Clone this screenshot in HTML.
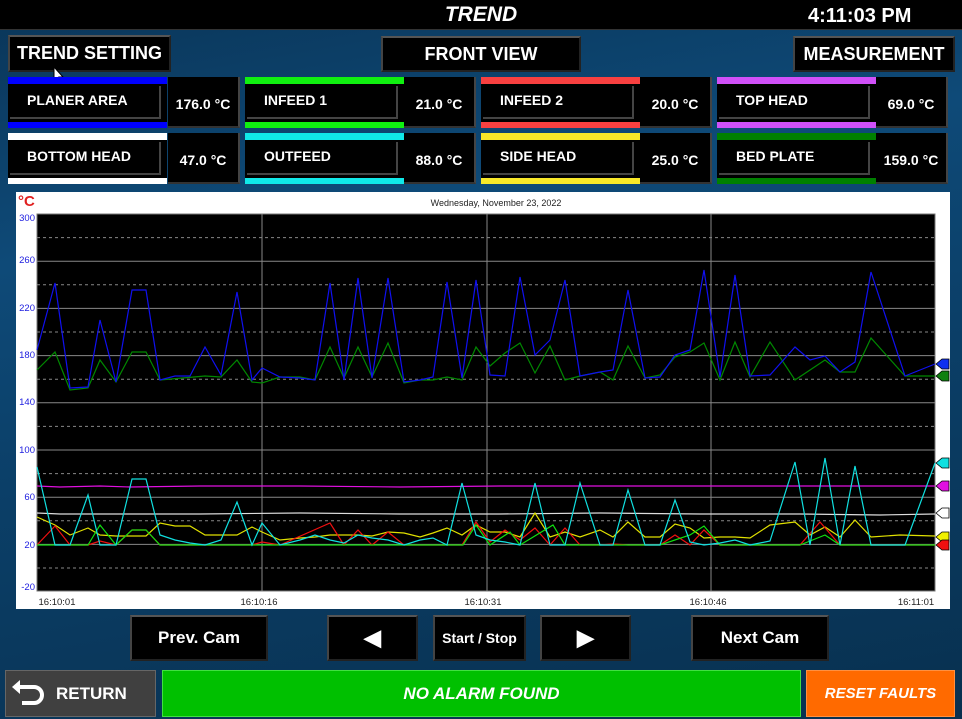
<!DOCTYPE html>
<html><head><meta charset="utf-8"><style>
*{box-sizing:border-box;margin:0;padding:0}
body{width:962px;height:719px;overflow:hidden;position:relative;font-family:"Liberation Sans",Arial,sans-serif;font-weight:bold;color:#fff;
background:linear-gradient(170deg,#0a3558 0%,#0e4a78 30%,#0b3f68 55%,#08304f 100%);}
.abs{position:absolute}
.top{left:0;top:0;width:962px;height:30px;background:#000;border-bottom:1px solid #333}
.btn{position:absolute;background:#000;border-top:2px solid #555;border-left:2px solid #444;border-right:2px solid #222;border-bottom:2px solid #222;display:flex;align-items:center;justify-content:center;color:#fff}
.grp{position:absolute;width:159px;height:51px;background:#000}
.grp .bar1{position:absolute;left:0;top:0;width:159px;height:7px}
.grp .bar2{position:absolute;left:0;bottom:0;width:159px;height:6px}
.grp .lab{position:absolute;left:2px;top:9px;width:151px;height:33px;border-right:2px solid #444;border-bottom:2px solid #444;font-size:14px;padding:6px 0 0 17px}
.val{position:absolute;width:72px;height:51px;background:#000;font-size:14px;display:flex;align-items:center;justify-content:center;border-right:2px solid #444;border-bottom:2px solid #333;padding-top:4px}
svg text{font-weight:normal}
</style></head><body>
<div class="abs top"></div>
<div class="abs" style="left:0;top:3px;width:962px;text-align:center;font-size:21px;font-style:italic">TREND</div>
<div class="abs" style="left:808px;top:5px;font-size:20px">4:11:03 PM</div>

<div class="btn" style="left:8px;top:35px;width:163px;height:37px;font-size:18px">TREND SETTING</div>
<div class="btn" style="left:381px;top:36px;width:200px;height:36px;font-size:18px">FRONT VIEW</div>
<div class="btn" style="left:793px;top:36px;width:162px;height:36px;font-size:18px">MEASUREMENT</div>
<svg class="abs" style="left:53px;top:66px" width="12" height="18"><path d="M1 1 L1 15 L4 12 L7 17 L9 16 L6 11 L10 11 Z" fill="#fff" stroke="#000" stroke-width="1"/></svg>

<div class="grp" style="left:8px;top:77px"><div class="bar1" style="background:#0000ff"></div><div class="lab">PLANER AREA</div><div class="bar2" style="background:#0000ff"></div></div>
<div class="val" style="left:168px;top:77px">176.0 °C</div>
<div class="grp" style="left:245px;top:77px"><div class="bar1" style="background:#10f010"></div><div class="lab">INFEED 1</div><div class="bar2" style="background:#10f010"></div></div>
<div class="val" style="left:404px;top:77px">21.0 °C</div>
<div class="grp" style="left:481px;top:77px"><div class="bar1" style="background:#f84040"></div><div class="lab">INFEED 2</div><div class="bar2" style="background:#f84040"></div></div>
<div class="val" style="left:640px;top:77px">20.0 °C</div>
<div class="grp" style="left:717px;top:77px"><div class="bar1" style="background:#d050f8"></div><div class="lab">TOP HEAD</div><div class="bar2" style="background:#d050f8"></div></div>
<div class="val" style="left:876px;top:77px">69.0 °C</div>

<div class="grp" style="left:8px;top:133px"><div class="bar1" style="background:#fff"></div><div class="lab">BOTTOM HEAD</div><div class="bar2" style="background:#fff"></div></div>
<div class="val" style="left:168px;top:133px">47.0 °C</div>
<div class="grp" style="left:245px;top:133px"><div class="bar1" style="background:#10e8e8"></div><div class="lab">OUTFEED</div><div class="bar2" style="background:#10e8e8"></div></div>
<div class="val" style="left:404px;top:133px">88.0 °C</div>
<div class="grp" style="left:481px;top:133px"><div class="bar1" style="background:#f8e828"></div><div class="lab">SIDE HEAD</div><div class="bar2" style="background:#f8e828"></div></div>
<div class="val" style="left:640px;top:133px">25.0 °C</div>
<div class="grp" style="left:717px;top:133px"><div class="bar1" style="background:#008000"></div><div class="lab">BED PLATE</div><div class="bar2" style="background:#008000"></div></div>
<div class="val" style="left:876px;top:133px">159.0 °C</div>

<svg class="abs" style="left:0;top:0" width="962" height="719" font-family="Liberation Sans, Arial, sans-serif">
<rect x="16" y="192" width="934" height="417" fill="#fff"/>
<text x="18" y="206" fill="#e02020" font-size="15" style="font-weight:bold">°C</text>
<text x="496" y="206" fill="#222" font-size="9" text-anchor="middle">Wednesday, November 23, 2022</text>
<rect x="37" y="214" width="898" height="377" fill="#000" stroke="#777"/>
<g stroke="#888" stroke-width="1">
<line x1="37" x2="935" y1="261.2" y2="261.2"/><line x1="37" x2="935" y1="308.4" y2="308.4"/><line x1="37" x2="935" y1="355.6" y2="355.6"/><line x1="37" x2="935" y1="402.8" y2="402.8"/><line x1="37" x2="935" y1="450" y2="450"/><line x1="37" x2="935" y1="497.2" y2="497.2"/><line x1="37" x2="935" y1="544.4" y2="544.4"/>
<line x1="262" x2="262" y1="214" y2="591"/><line x1="487" x2="487" y1="214" y2="591"/><line x1="711" x2="711" y1="214" y2="591"/>
</g>
<g stroke="#888" stroke-width="1" stroke-dasharray="3,3">
<line x1="37" x2="935" y1="237.6" y2="237.6"/><line x1="37" x2="935" y1="284.8" y2="284.8"/><line x1="37" x2="935" y1="332" y2="332"/><line x1="37" x2="935" y1="379.2" y2="379.2"/><line x1="37" x2="935" y1="426.4" y2="426.4"/><line x1="37" x2="935" y1="473.6" y2="473.6"/><line x1="37" x2="935" y1="520.8" y2="520.8"/><line x1="37" x2="935" y1="568" y2="568"/>
</g>
<g fill="#2020e0" font-size="9.5" text-anchor="end">
<text x="35" y="221">300</text><text x="35" y="263">260</text><text x="35" y="311">220</text><text x="35" y="358">180</text><text x="35" y="405">140</text><text x="35" y="453">100</text><text x="35" y="500">60</text><text x="35" y="548">20</text><text x="35" y="590">-20</text>
</g>
<g fill="#222" font-size="9.5" text-anchor="middle">
<text x="57" y="605">16:10:01</text><text x="259" y="605">16:10:16</text><text x="483" y="605">16:10:31</text><text x="708" y="605">16:10:46</text><text x="916" y="605">16:11:01</text>
</g>
<g fill="none" stroke-width="1.2">
<polyline stroke="#080" points="37,370 55,352 70,390 88,388 100,360 116,382 132,352 146,352 160,380 205,376 221,377 237,360 252,382 262,383 280,377 300,377 315,380 330,347 344,378 358,347 372,377 388,343 404,383 420,380 433,380 447,377 462,380 476,347 490,366 505,353 520,343 535,373 550,346 565,380 580,376 600,372 613,380 628,346 645,378 660,375 675,357 690,352 704,343 720,380 735,342 750,377 770,342 795,380 825,360 840,372 855,372 871,338 905,376 935,376"/>
<polyline stroke="#1010f0" points="37,350 55,283 70,388 88,387 100,320 116,382 132,290 146,290 160,380 175,376 190,376 205,347 221,375 237,292 252,380 262,368 280,377 300,378 315,380 330,283 344,380 358,278 372,378 388,278 404,382 420,380 433,377 447,282 462,378 476,280 490,375 505,376 520,277 535,355 550,340 565,280 580,376 600,372 613,370 628,290 645,378 660,377 675,355 690,350 704,270 720,377 735,275 750,376 770,375 795,347 810,360 825,356 840,372 855,362 871,272 905,376 935,364"/>
<polyline stroke="#e010e0" points="37,486 60,487 100,486 130,487 200,486 300,486 400,487 500,486 600,486 700,486 800,486 935,486"/>
<polyline stroke="#ddd" points="37,513 60,514 120,514 200,514 300,513 400,514 500,514 600,513 700,514 800,514 880,515 935,514"/>
<polyline stroke="#e0e000" points="37,517 55,525 70,535 88,528 100,535 116,536 132,536 146,536 160,523 175,526 190,526 205,535 221,535 237,535 252,527 262,532 280,540 300,538 315,537 330,535 344,535 358,535 372,536 388,532 404,533 420,537 433,533 447,528 462,535 476,525 490,532 505,532 520,537 535,513 550,537 565,532 580,537 600,530 613,537 628,522 645,537 660,537 675,524 690,528 704,538 720,537 735,537 750,538 770,525 795,522 810,535 825,527 840,537 855,520 871,537 900,535 935,536"/>
<polyline stroke="#f01010" points="37,545 55,526 70,545 88,545 100,541 116,545 132,530 146,530 160,545 205,545 221,545 237,545 252,545 262,542 280,545 330,523 344,545 358,530 372,545 388,532 404,545 420,545 433,545 447,545 462,545 476,522 490,542 505,530 520,540 535,528 550,545 565,528 580,545 600,545 613,544 628,545 645,545 660,545 675,535 690,545 704,530 720,545 750,545 800,545 820,522 840,545 935,545"/>
<polyline stroke="#10e010" points="37,545 70,545 88,545 100,525 116,545 132,530 146,530 160,545 250,545 300,545 350,545 400,545 450,545 463,545 476,525 490,545 510,532 520,545 553,525 565,545 600,545 620,545 640,545 660,545 690,535 704,526 720,545 800,545 825,535 840,545 935,545"/>
<polyline stroke="#10e0e0" points="37,467 55,545 70,545 88,495 100,545 116,545 132,479 146,479 160,535 175,540 190,543 205,545 221,540 237,502 252,545 262,523 280,545 300,540 315,535 330,540 344,543 358,535 372,538 388,540 404,545 420,540 433,538 447,545 462,483 476,535 490,540 505,542 520,545 535,483 550,545 565,545 580,483 600,545 613,545 628,490 645,545 660,545 675,500 690,542 704,545 720,543 735,540 750,545 770,541 795,462 810,545 825,458 840,545 855,466 871,545 905,545 935,463"/>
</g>
<g stroke="#000" stroke-width="0.8">
<path d="M936,364 l6,-5 h7 v10 h-7 z" fill="#1030f0"/>
<path d="M936,376 l6,-5 h7 v10 h-7 z" fill="#108010"/>
<path d="M936,463 l6,-5 h7 v10 h-7 z" fill="#10e0e0"/>
<path d="M936,486 l6,-5 h7 v10 h-7 z" fill="#e010e0"/>
<path d="M936,513 l6,-5 h7 v10 h-7 z" fill="#fff"/>
<path d="M936,537 l6,-5 h7 v10 h-7 z" fill="#f0f000"/>
<path d="M936,545 l6,-5 h7 v10 h-7 z" fill="#f01010"/>
</g>
</svg>

<div class="btn" style="left:130px;top:615px;width:138px;height:46px;font-size:17px">Prev. Cam</div>
<div class="btn" style="left:327px;top:615px;width:91px;height:46px;font-size:22px">◀</div>
<div class="btn" style="left:433px;top:615px;width:93px;height:46px;font-size:14px">Start / Stop</div>
<div class="btn" style="left:540px;top:615px;width:91px;height:46px;font-size:22px">▶</div>
<div class="btn" style="left:691px;top:615px;width:138px;height:46px;font-size:17px">Next Cam</div>

<div class="abs" style="left:5px;top:670px;width:151px;height:47px;background:#404040;border:1px solid #666;display:flex;align-items:center;font-size:17px">
<svg width="40" height="30" style="margin:0 8px 0 2px"><path d="M10 8 h16 a8 8 0 0 1 0 16 h-12" fill="none" stroke="#fff" stroke-width="4"/><path d="M4 8 l8 -7 v14 z" fill="#fff"/></svg>RETURN</div>
<div class="abs" style="left:162px;top:670px;width:639px;height:47px;background:#00c000;border:1px solid #40e040;display:flex;align-items:center;justify-content:center;font-size:17px;font-style:italic">NO ALARM FOUND</div>
<div class="abs" style="left:806px;top:670px;width:149px;height:47px;background:#ff6a00;border:1px solid #ff9040;display:flex;align-items:center;justify-content:center;font-size:15px;font-style:italic">RESET FAULTS</div>
</body></html>
